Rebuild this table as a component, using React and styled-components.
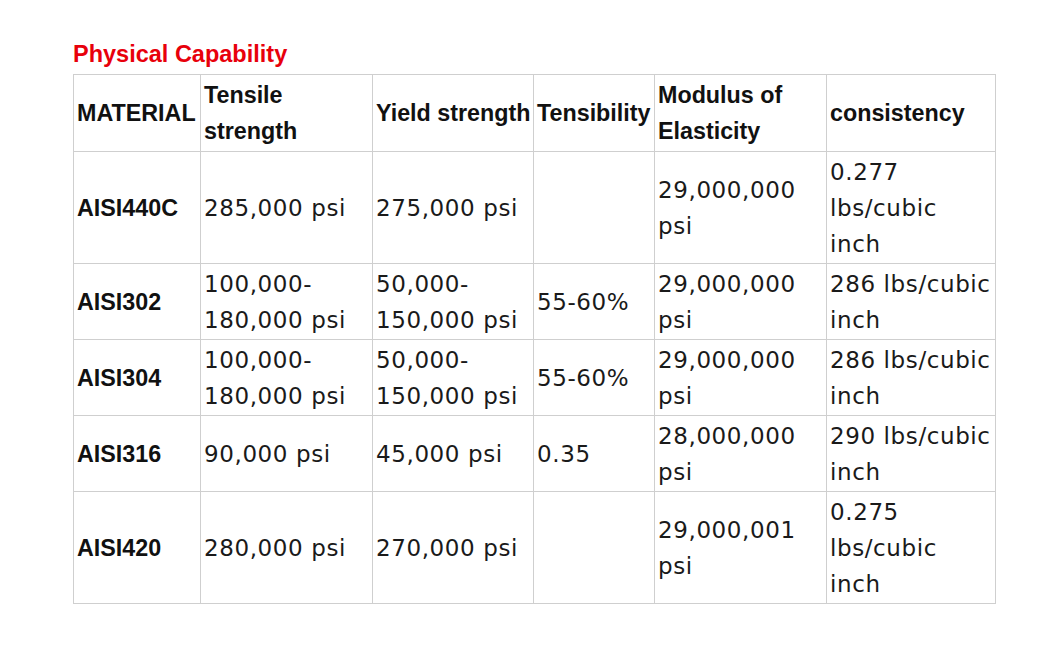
import styled, { createGlobalStyle } from "styled-components"

const GlobalStyle = createGlobalStyle`
    body {
        margin: 0;
        background: #ffffff;
    }
`

const columns = [127, 172, 161, 121, 172, 169]

const headers = ["MATERIAL", "Tensile strength", "Yield strength", "Tensibility", "Modulus of Elasticity", "consistency"]

const rows = [
    { name: "AISI440C", height: 112, cells: ["285,000 psi", "275,000 psi", "", "29,000,000 psi", "0.277 lbs/cubic inch"] },
    { name: "AISI302", height: 76, cells: ["100,000-180,000 psi", "50,000-150,000 psi", "55-60%", "29,000,000 psi", "286 lbs/cubic inch"] },
    { name: "AISI304", height: 76, cells: ["100,000-180,000 psi", "50,000-150,000 psi", "55-60%", "29,000,000 psi", "286 lbs/cubic inch"] },
    { name: "AISI316", height: 76, cells: ["90,000 psi", "45,000 psi", "0.35", "28,000,000 psi", "290 lbs/cubic inch"] },
    { name: "AISI420", height: 112, cells: ["280,000 psi", "270,000 psi", "", "29,000,001 psi", "0.275 lbs/cubic inch"] },
]

export default function App() {
    return (
        <Page>
            <GlobalStyle />
            <Title>Physical Capability</Title>
            <Table>
                <colgroup>
                    {columns.map((w, i) => <col key={i} style={{ width: w }} />)}
                </colgroup>
                <tbody>
                    <Row height={77}>
                        {headers.map(h => <HeadCell key={h}>{h}</HeadCell>)}
                    </Row>
                    {rows.map(row => (
                        <Row key={row.name} height={row.height}>
                            <HeadCell>{row.name}</HeadCell>
                            {row.cells.map((c, i) => <Cell key={i}>{c}</Cell>)}
                        </Row>
                    ))}
                </tbody>
            </Table>
        </Page>
    )
}

const Page = styled.div`
    padding: 40px 0 0 73px;
`

const Title = styled.div`
    font-family: "Liberation Sans", Arial, sans-serif;
    font-weight: bold;
    font-size: 23.5px;
    line-height: 28px;
    color: #e8000b;
    margin-bottom: 6px;
`

const Table = styled.table`
    border-collapse: collapse;
    table-layout: fixed;
    width: 922px;
`

const Row = styled.tr`
    height: ${props => props.height}px;
`

const HeadCell = styled.td`
    border: 1px solid #cfcfcf;
    padding: 0 0 0 3px;
    font-family: "Liberation Sans", Arial, sans-serif;
    font-weight: bold;
    font-size: 23.3px;
    line-height: 36px;
    color: #111;
    vertical-align: middle;
`

const Cell = styled.td`
    border: 1px solid #cfcfcf;
    padding: 0 2px 0 3px;
    font-family: "DejaVu Sans", Verdana, sans-serif;
    font-size: 23px;
    letter-spacing: 0.6px;
    line-height: 36px;
    color: #1a1a1a;
    vertical-align: middle;
`
